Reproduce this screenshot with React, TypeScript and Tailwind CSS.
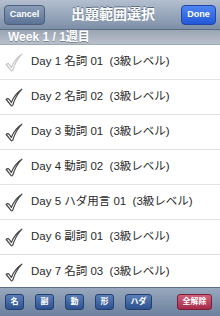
import React from 'react';

const days = [
  { day: 1, label: '名詞 01', on: false },
  { day: 2, label: '名詞 02', on: true },
  { day: 3, label: '動詞 01', on: true },
  { day: 4, label: '動詞 02', on: true },
  { day: 5, label: 'ハダ用言 01', on: true },
  { day: 6, label: '副詞 01', on: true },
  { day: 7, label: '名詞 03', on: true },
];

function Check({ on }: { on: boolean }) {
  return (
    <svg width="18" height="19" viewBox="0 0 18 19" className="shrink-0">
      <path
        d="M1.2 11.5 C2.2 10.3 3.5 10.4 4.3 11.5 L6.3 14.4 C8.5 9 12 4.3 16.9 1.2 C13 5.2 10 10 7.7 17.3 C7.3 18 6.4 18 6 17.4 Z"
        fill="white"
        stroke={on ? '#454545' : '#c6c6c6'}
        strokeWidth="1.2"
        strokeLinejoin="round"
      />
    </svg>
  );
}

const tags = ['名', '副', '動', '形', 'ハダ'];

export default function App() {
  const font = { fontFamily: '"Liberation Sans", "Noto Sans CJK JP", sans-serif' };
  return (
    <div className="w-[220px] h-[316px] flex flex-col overflow-hidden bg-white" style={font}>
      {/* nav bar */}
      <div className="h-[30px] shrink-0 flex items-center justify-between px-[4px] bg-gradient-to-b from-[#b3bfcf] to-[#7d8fa8] border-b border-[#5c6c82]">
        <button className="h-[20px] w-[41px] rounded-[4px] border border-[#4c5f7c] bg-gradient-to-b from-[#8a9cb6] to-[#5b7396] text-white text-[9px] font-bold">
          Cancel
        </button>
        <div className="text-white text-[14px] font-bold [text-shadow:0_-1px_0_#5a6a80]">出題範囲選択</div>
        <button className="h-[20px] w-[35px] rounded-[4px] border border-[#1f46a8] bg-gradient-to-b from-[#4f85f0] to-[#2257d8] text-white text-[9px] font-bold">
          Done
        </button>
      </div>
      {/* section header */}
      <div className="h-[15px] shrink-0 flex items-center px-[8px] bg-gradient-to-b from-[#9aa5b3] to-[#b8c0ca] border-b border-[#9ea7b2]">
        <span className="text-white text-[12px] font-bold leading-none [text-shadow:0_1px_0_#7d8794]">Week 1 / 1週目</span>
      </div>
      {/* list */}
      <div className="flex-1 overflow-hidden">
        {days.map((d) => (
          <div key={d.day} className="h-[35px] flex items-center gap-[8px] pl-[5px] border-b border-[#e3e3e3]">
            <Check on={d.on} />
            <span className="text-[11.5px] text-[#2a2a2a] whitespace-pre">{`Day ${d.day} ${d.label}  (3級レベル)`}</span>
          </div>
        ))}
      </div>
      {/* toolbar */}
      <div className="h-[29px] shrink-0 flex items-center px-[5px] bg-gradient-to-b from-[#98a8bd] to-[#6c809e] border-t border-[#5d6e87]">
        <div className="flex gap-[11px]">
          {tags.map((t) => (
            <button
              key={t}
              className={`h-[16px] ${t === 'ハダ' ? 'w-[27px]' : 'w-[19px]'} rounded-[3px] border border-[#23406e] bg-gradient-to-b from-[#5a7fb8] to-[#2e5190] text-white text-[8px] font-bold leading-none`}
            >
              {t}
            </button>
          ))}
        </div>
        <button className="ml-auto mr-[3px] h-[16px] w-[35px] rounded-[3px] border border-[#7a1f38] bg-gradient-to-b from-[#d0607c] to-[#a42a4a] text-white text-[8px] font-bold leading-none">
          全解除
        </button>
      </div>
    </div>
  );
}
